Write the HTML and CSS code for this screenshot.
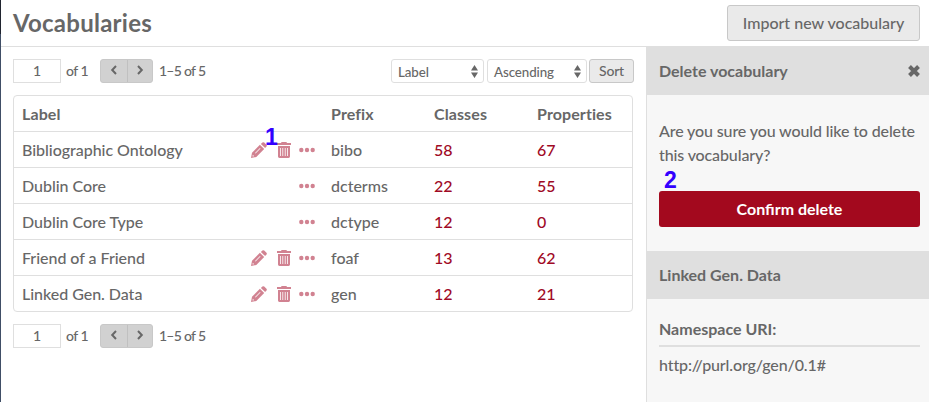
FILE: index.html
```html
<!DOCTYPE html>
<html lang="en">
<head>
<meta charset="utf-8">
<title>Vocabularies</title>
<link rel="stylesheet" href="styles.css">
</head>
<body>
<svg class="defs" width="0" height="0" aria-hidden="true">
  <symbol id="pencil" viewBox="0 0 16 16"><path fill-rule="evenodd" d="M0 16 1 10.700 8.900 2.800l4.300 4.300-7.900 7.900ZM1.800 12.800 1.500 14.500 3.200 14.200ZM4 10.900 9 5.900 9.500 6.400 4.500 11.400ZM9.900 1.900 11.400.5Q12.300-.2 13.200.5L15.500 2.800Q16.200 3.700 15.500 4.600L14.100 6.100Z"/></symbol>
  <symbol id="trash" viewBox="0 0 14 16"><path fill-rule="evenodd" d="M4.300 0h5.400v1H14v2H0v-2h4.300ZM1 4h12V14.600Q13 16 11.600 16H2.400Q1 16 1 14.600ZM3.100 6v8h.8V6ZM5.400 6v8h.8V6ZM7.800 6v8h.8V6ZM10.100 6v8h.8V6Z"/></symbol>
  <symbol id="dots" viewBox="0 0 16 6"><circle cx="2.300" cy="3" r="2.200"/><circle cx="8" cy="3" r="2.200"/><circle cx="13.700" cy="3" r="2.200"/></symbol>
  <symbol id="left" viewBox="0 0 8 10"><path d="M6 1 2.200 5 6 9" fill="none" stroke="currentColor" stroke-width="2"/></symbol>
  <symbol id="right" viewBox="0 0 8 10"><path d="M2 1 5.800 5 2 9" fill="none" stroke="currentColor" stroke-width="2"/></symbol>
  <symbol id="updown" viewBox="0 0 7 13"><path d="M0 5.500 3.500 0 7 5.500ZM0 7.500H7L3.500 13Z"/></symbol>
  <symbol id="close" viewBox="0 0 12 12"><path d="M1.500 1.500 10.500 10.500M10.500 1.500 1.500 10.500" stroke="currentColor" stroke-width="4"/></symbol>
</svg>
<div class="page">
  <header class="title-bar">
    <h1>Vocabularies</h1>
    <button class="button import">Import new vocabulary</button>
  </header>
  <div class="columns">
    <main class="content">
      <div class="controls">
        <nav class="pagination">
          <span class="page-number">1</span><span class="count">of 1</span>
          <span class="arrows"><span><svg><use href="#left"/></svg></span><span><svg><use href="#right"/></svg></span></span>
          <span class="range">1–5 of 5</span>
        </nav>
        <div class="sorting">
          <span class="select by">Label<svg><use href="#updown"/></svg></span>
          <span class="select order">Ascending<svg><use href="#updown"/></svg></span>
          <button class="button sort">Sort</button>
        </div>
      </div>
      <div class="table">
        <div class="row head"><span>Label</span><span>Prefix</span><span>Classes</span><span>Properties</span></div>
        <div class="row"><span class="name">Bibliographic Ontology<span class="actions"><svg class="pencil"><use href="#pencil"/></svg><svg class="trash"><use href="#trash"/></svg><svg class="dots"><use href="#dots"/></svg><b class="mark one">1</b></span></span><span>bibo</span><a>58</a><a>67</a></div>
        <div class="row"><span class="name">Dublin Core<span class="actions"><svg class="dots"><use href="#dots"/></svg></span></span><span>dcterms</span><a>22</a><a>55</a></div>
        <div class="row"><span class="name">Dublin Core Type<span class="actions"><svg class="dots"><use href="#dots"/></svg></span></span><span>dctype</span><a>12</a><a>0</a></div>
        <div class="row"><span class="name">Friend of a Friend<span class="actions"><svg class="pencil"><use href="#pencil"/></svg><svg class="trash"><use href="#trash"/></svg><svg class="dots"><use href="#dots"/></svg></span></span><span>foaf</span><a>13</a><a>62</a></div>
        <div class="row"><span class="name">Linked Gen. Data<span class="actions"><svg class="pencil"><use href="#pencil"/></svg><svg class="trash"><use href="#trash"/></svg><svg class="dots"><use href="#dots"/></svg></span></span><span>gen</span><a>12</a><a>21</a></div>
      </div>
      <nav class="pagination">
        <span class="page-number">1</span><span class="count">of 1</span>
        <span class="arrows"><span><svg><use href="#left"/></svg></span><span><svg><use href="#right"/></svg></span></span>
        <span class="range">1–5 of 5</span>
      </nav>
    </main>
    <aside class="sidebar">
      <h2>Delete vocabulary<svg class="close"><use href="#close"/></svg></h2>
      <div class="confirm">
        <p>Are you sure you would like to delete this vocabulary?</p>
        <b class="mark two">2</b>
        <button class="delete">Confirm delete</button>
      </div>
      <h2>Linked Gen. Data</h2>
      <div class="meta">
        <h3>Namespace URI:</h3>
        <p>http://purl.org/gen/0.1#</p>
      </div>
    </aside>
  </div>
</div>
</body>
</html>
```
FILE: styles.css
```css
* { box-sizing: border-box; }
body {
  margin: 0;
  background: #fff;
  color: #676767;
  font: 500 16px/24px Lato, sans-serif;
}
h1, h2, h3, p { margin: 0; }
svg { display: block; fill: currentColor; }
.defs { position: absolute; }
.page {
  display: flex;
  flex-direction: column;
  height: 402px;
  overflow: hidden;
  border-left: 1px solid;
  border-image: linear-gradient(#20242f 35px, #404e66 35px) 1;
}
.title-bar {
  display: flex;
  flex: none;
  align-items: center;
  justify-content: space-between;
  height: 47px;
  padding: 0 9px 0 12px;
  border-bottom: 1px solid #dfdfdf;
}
h1 { font-size: 24px; line-height: 36px; font-weight: 700; letter-spacing: .25px; }
.button {
  padding: 0;
  border: 1px solid #c8c8c8;
  border-radius: 3px;
  background: #eaeaea;
  color: #676767;
  font: inherit;
}
.import { width: 193px; height: 36px; }
.columns { display: flex; flex: 1; }
.content { flex: 1; padding: 12px 13px 0 12px; }
.controls { display: flex; justify-content: space-between; }
.pagination, .sorting { display: flex; height: 24px; font-size: 14px; }
.page-number {
  width: 48px;
  border: 1px solid #dfdfdf;
  line-height: 22px;
  text-align: center;
}
.count { width: 39px; padding-left: 5px; letter-spacing: -.5px; }
.arrows {
  display: flex;
  width: 53px;
  border: 1px solid #c8c8c8;
  border-radius: 3px;
  background: #d1d1d1;
}
.arrows span { flex: 1; padding: 5px 0 0 9px; }
.arrows span + span { padding-left: 8px; border-left: 1px solid #c0c0c0; }
.arrows svg { width: 8px; height: 10px; }
.range { padding-left: 6px; letter-spacing: -.8px; word-spacing: .3px; }
.sorting { margin-right: -1px; }
.select {
  display: flex;
  align-items: center;
  justify-content: space-between;
  padding: 2px 5px 0 6px;
  border: 1px solid #dfdfdf;
  border-radius: 3px;
  font-size: 13.333px;
  letter-spacing: -.1px;
}
.select svg { width: 7px; height: 13px; margin-top: -2px; }
.by { width: 93px; margin-right: 3px; }
.order { width: 100px; margin-right: 2px; }
.sort { width: 45px; line-height: 20px; letter-spacing: -.2px; }
.table {
  margin: 12px 0;
  border: 1px solid #dfdfdf;
  border-radius: 4px;
}
.row {
  display: grid;
  grid-template-columns: 309px 103px 103px 1fr;
  height: 36px;
  padding-left: 8px;
  border-bottom: 1px solid #dfdfdf;
  line-height: 35px;
}
.row:last-child { height: 35px; border: 0; }
.head { font-weight: 700; letter-spacing: .1px; }
.row a { color: #a00a25; }
.name { display: flex; justify-content: space-between; letter-spacing: -.03px; }
.actions {
  position: relative;
  display: flex;
  align-items: center;
  height: 35px;
  margin-right: 16px;
  color: #d18291;
}
.pencil { width: 16px; height: 16px; margin-right: 10px; }
.trash { width: 14px; height: 16px; margin-right: 8px; }
.dots { width: 16px; height: 6px; }
.mark {
  position: absolute;
  color: #30f;
  font: 700 23px/23px "Liberation Sans", sans-serif;
}
.one { left: 14px; top: -6px; }
.sidebar {
  width: 283px;
  margin-top: -1px;
  border-left: 1px solid #dfdfdf;
  background: #f7f7f7;
}
h2 {
  display: flex;
  justify-content: space-between;
  align-items: center;
  height: 49px;
  padding: 1px 9px 0 12px;
  background: #dfdfdf;
  font-size: 16px;
  font-weight: 700;
}
.confirm + h2 { height: 48px; padding-top: 0; }
.close { width: 12px; height: 12px; margin-top: -1px; }
.confirm { position: relative; height: 156px; padding: 24px 9px 0 12px; }
.sidebar p { letter-spacing: -.12px; }
.delete {
  display: block;
  width: 100%;
  height: 36px;
  margin-top: 24px;
  padding: 0;
  border: 0;
  border-radius: 3px;
  background: #a3091e;
  color: #fff;
  font: 700 16px/36px Lato, sans-serif;
}
.two { left: 17px; top: 74px; }
.meta { padding: 18px 9px 0 12px; }
h3 {
  height: 30px;
  margin-bottom: 6px;
  border-bottom: 2px solid #dfdfdf;
  font-size: 16px;
  line-height: 23px;
  font-weight: 700;
}
```
